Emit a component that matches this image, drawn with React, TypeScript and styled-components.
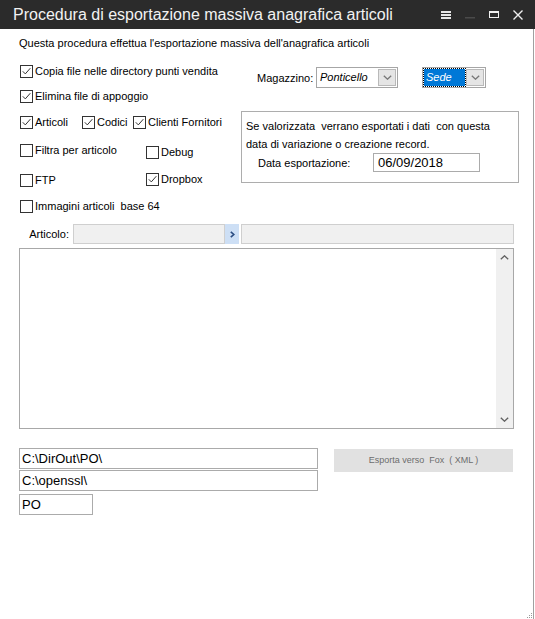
import React from "react";
import styled, { createGlobalStyle } from "styled-components";

const GlobalStyle = createGlobalStyle`
  html, body { margin: 0; padding: 0; background: #fff; }
  body {
    font-family: "Liberation Sans", Arial, sans-serif;
    font-size: 11px;
    color: #000;
  }
  * { box-sizing: border-box; }
`;

const Window = styled.div`
  width: 535px;
  height: 619px;
  display: flex;
  flex-direction: column;
  background: #fff;
  overflow: hidden;
`;

const TitleBar = styled.div`
  height: 29px;
  flex: none;
  background: #2b2b2b;
  display: flex;
  align-items: center;
  padding: 0 5px 0 13px;
`;

const Title = styled.div`
  flex: 1;
  color: #f2f2f2;
  font-size: 16px;
  line-height: 29px;
  white-space: nowrap;
`;

const Controls = styled.div`
  display: flex;
`;

const CtrlButton = styled.div`
  width: 24px;
  height: 29px;
  display: flex;
  align-items: center;
  justify-content: center;
`;

const Body = styled.div`
  position: relative;
  flex: 1;
  margin-right: 1px;
  border-right: 1px solid #a0a0a0;
  padding: 8px 0 0 19px;
  display: flex;
  flex-direction: column;
`;

const Intro = styled.div`
  line-height: 13px;
  height: 13px;
  white-space: nowrap;
`;

const TopSection = styled.div`
  display: grid;
  grid-template-columns: 222px 1fr;
  align-items: start;
`;

const LeftCol = styled.div`
  display: flex;
  flex-direction: column;
`;

const RightCol = styled.div`
  display: flex;
  flex-direction: column;
`;

const CheckRow = styled.div<{ $mt: number; $cols?: string }>`
  display: grid;
  grid-template-columns: ${(p) => p.$cols ?? "auto"};
  justify-content: start;
  margin-top: ${(p) => p.$mt}px;
  margin-left: 1px;
  height: 13px;
`;

const CheckLabel = styled.label<{ $dy?: number }>`
  display: flex;
  align-items: center;
  gap: 2px;
  height: 13px;
  line-height: 13px;
  white-space: pre;
  margin-top: ${(p) => p.$dy ?? 0}px;
`;

const Box = styled.span`
  width: 13px;
  height: 13px;
  flex: none;
  border: 1px solid #333;
  background: #fff;
  display: flex;
  align-items: center;
  justify-content: center;
`;

const MagRow = styled.div`
  display: flex;
  align-items: center;
  height: 21px;
  margin-top: 17px;
  padding-left: 16px;
`;

const MagLabel = styled.span`
  width: 59px;
  white-space: nowrap;
`;

const Combo = styled.div<{ $w: number; $ml?: number }>`
  width: ${(p) => p.$w}px;
  height: 21px;
  margin-left: ${(p) => p.$ml ?? 0}px;
  border: 1px solid #a6a6a6;
  background: #fff;
  padding: 1px;
  display: flex;
  gap: 1px;
`;

const ComboText = styled.div<{ $selected?: boolean }>`
  flex: 1;
  font-style: italic;
  line-height: 17px;
  padding-left: 2px;
  white-space: nowrap;
  overflow: hidden;
  color: ${(p) => (p.$selected ? "#fff" : "#000")};
  background: ${(p) => (p.$selected ? "#0078d7" : "transparent")};
  outline: ${(p) => (p.$selected ? "1px dotted #000" : "none")};
`;

const ComboButton = styled.div`
  width: 18px;
  height: 17px;
  flex: none;
  border: 1px solid #b9b9b9;
  background: #e5e5e5;
  display: flex;
  align-items: center;
  justify-content: center;
`;

const GroupBox = styled.div`
  width: 278px;
  height: 72px;
  margin-top: 23px;
  border: 1px solid #adadad;
  padding: 5px 4px 0 4px;
`;

const GroupLine = styled.div`
  line-height: 18px;
  height: 18px;
  white-space: pre;
`;

const DateRow = styled.div`
  display: flex;
  align-items: center;
  height: 19px;
  padding-left: 12px;
`;

const DateLabel = styled.span`
  width: 115px;
  white-space: nowrap;
`;

const TextField = styled.div<{ $w: number; $h?: number; $mt?: number }>`
  width: ${(p) => p.$w}px;
  height: ${(p) => p.$h ?? 21}px;
  margin-top: ${(p) => p.$mt ?? 0}px;
  border: 1px solid #ababab;
  background: #fff;
  font-size: 13px;
  line-height: ${(p) => (p.$h ?? 21) - 2}px;
  padding-left: 2px;
  white-space: nowrap;
`;

const DateField = styled(TextField)`
  padding-left: 4px;
`;

const ArticoloRow = styled.div`
  display: flex;
  height: 20px;
  margin-top: 11px;
`;

const ArtLabel = styled.span`
  width: 50px;
  margin-right: 4px;
  text-align: right;
  line-height: 20px;
`;

const GrayField = styled.div<{ $w: number; $ml?: number }>`
  width: ${(p) => p.$w}px;
  margin-left: ${(p) => p.$ml ?? 0}px;
  height: 20px;
  border: 1px solid #cfcfcf;
  background: #f0f0f0;
`;

const LookupButton = styled.div`
  width: 14px;
  height: 20px;
  background: #cddff5;
  display: flex;
  align-items: center;
  justify-content: center;
`;

const ListArea = styled.div`
  width: 495px;
  height: 181px;
  margin-top: 4px;
  border: 1px solid #a8a8a8;
  display: flex;
  justify-content: flex-end;
`;

const ScrollBar = styled.div`
  width: 17px;
  height: 100%;
  background: #f0f0f0;
  display: flex;
  flex-direction: column;
  justify-content: space-between;
`;

const ScrollArrow = styled.div`
  height: 17px;
  display: flex;
  align-items: center;
  justify-content: center;
`;

const BottomSection = styled.div`
  display: grid;
  grid-template-columns: 299px 179px;
  column-gap: 16px;
  align-items: start;
  margin-top: 19px;
`;

const PathCol = styled.div`
  display: flex;
  flex-direction: column;
`;

const ExportButton = styled.div`
  height: 23px;
  margin-top: 1px;
  background: #e1e1e1;
  color: #6d6d6d;
  font-size: 9px;
  line-height: 23px;
  text-align: center;
  white-space: pre;
`;

const Grip = styled.svg`
  position: absolute;
  right: 0;
  bottom: 0;
`;

const CheckMark = () => (
  <svg width="9" height="9" viewBox="0 0 9 9">
    <path d="M0.8 4.3 L3.3 6.9 L8.3 1.2" fill="none" stroke="#333" strokeWidth="1" />
  </svg>
);

const Check = ({ label, checked, dy }: { label: string; checked?: boolean; dy?: number }) => (
  <CheckLabel $dy={dy}>
    <Box>{checked && <CheckMark />}</Box>
    <span>{label}</span>
  </CheckLabel>
);

const Chevron = ({ up, color = "#555" }: { up?: boolean; color?: string }) => (
  <svg width="9" height="5" viewBox="0 0 9 5">
    <path
      d={up ? "M0.8 4.3 L4.5 0.8 L8.2 4.3" : "M0.8 0.7 L4.5 4.2 L8.2 0.7"}
      fill="none"
      stroke={color}
      strokeWidth="1.3"
    />
  </svg>
);

export default function App() {
  return (
    <>
      <GlobalStyle />
      <Window>
        <TitleBar>
          <Title>Procedura di esportazione massiva anagrafica articoli</Title>
          <Controls>
            <CtrlButton>
              <svg width="10" height="8" viewBox="0 0 10 8">
                <rect x="0" y="0" width="10" height="2" fill="#e6e6e6" />
                <rect x="0" y="3" width="10" height="2" fill="#e6e6e6" />
                <rect x="0" y="6" width="10" height="2" fill="#e6e6e6" />
              </svg>
            </CtrlButton>
            <CtrlButton>
              <svg width="10" height="10" viewBox="0 0 10 10">
                <rect x="0" y="7" width="10" height="1.5" fill="#4a4a4a" />
              </svg>
            </CtrlButton>
            <CtrlButton>
              <svg width="10" height="7" viewBox="0 0 10 7">
                <rect x="0.5" y="0.5" width="9" height="6" fill="none" stroke="#f0f0f0" strokeWidth="1" />
                <rect x="0" y="0" width="10" height="2" fill="#f0f0f0" />
              </svg>
            </CtrlButton>
            <CtrlButton>
              <svg width="10" height="10" viewBox="0 0 10 10">
                <path d="M0.5 0.5 L9.5 9.5 M9.5 0.5 L0.5 9.5" stroke="#f0f0f0" strokeWidth="1.4" />
              </svg>
            </CtrlButton>
          </Controls>
        </TitleBar>
        <Body>
          <Intro>Questa procedura effettua l'esportazione massiva dell'anagrafica articoli</Intro>
          <TopSection>
            <LeftCol>
              <CheckRow $mt={15}>
                <Check checked label="Copia file nelle directory punti vendita" />
              </CheckRow>
              <CheckRow $mt={12}>
                <Check checked label="Elimina file di appoggio" />
              </CheckRow>
              <CheckRow $mt={13} $cols="62px 51px auto">
                <Check checked label="Articoli" />
                <Check checked label="Codici" />
                <Check checked label="Clienti Fornitori" />
              </CheckRow>
              <CheckRow $mt={15} $cols="126px auto">
                <Check label="Filtra per articolo" />
                <Check label="Debug" dy={2} />
              </CheckRow>
              <CheckRow $mt={17} $cols="126px auto">
                <Check label="FTP" />
                <Check checked label="Dropbox" dy={-1} />
              </CheckRow>
              <CheckRow $mt={13}>
                <Check label="Immagini articoli  base 64" />
              </CheckRow>
            </LeftCol>
            <RightCol>
              <MagRow>
                <MagLabel>Magazzino:</MagLabel>
                <Combo $w={82}>
                  <ComboText>Ponticello</ComboText>
                  <ComboButton>
                    <Chevron color="#777" />
                  </ComboButton>
                </Combo>
                <Combo $w={64} $ml={24}>
                  <ComboText $selected>Sede</ComboText>
                  <ComboButton>
                    <Chevron color="#777" />
                  </ComboButton>
                </Combo>
              </MagRow>
              <GroupBox>
                <GroupLine>{"Se valorizzata  verrano esportati i dati  con questa"}</GroupLine>
                <GroupLine>data di variazione o creazione record.</GroupLine>
                <DateRow>
                  <DateLabel>Data esportazione:</DateLabel>
                  <DateField $w={107} $h={19}>06/09/2018</DateField>
                </DateRow>
              </GroupBox>
            </RightCol>
          </TopSection>
          <ArticoloRow>
            <ArtLabel>Articolo:</ArtLabel>
            <GrayField $w={152} />
            <LookupButton>
              <svg width="5" height="7" viewBox="0 0 5 7">
                <path d="M0.8 0.8 L3.8 3.5 L0.8 6.2" fill="none" stroke="#2a4c82" strokeWidth="1.6" />
              </svg>
            </LookupButton>
            <GrayField $w={273} $ml={2} />
          </ArticoloRow>
          <ListArea>
            <ScrollBar>
              <ScrollArrow>
                <Chevron up color="#606060" />
              </ScrollArrow>
              <ScrollArrow>
                <Chevron color="#606060" />
              </ScrollArrow>
            </ScrollBar>
          </ListArea>
          <BottomSection>
            <PathCol>
              <TextField $w={299}>C:\DirOut\PO\</TextField>
              <TextField $w={299} $mt={1}>C:\openssl\</TextField>
              <TextField $w={74} $mt={3}>PO</TextField>
            </PathCol>
            <ExportButton>{"Esporta verso  Fox  ( XML )"}</ExportButton>
          </BottomSection>
          <Grip width="7" height="7" viewBox="0 0 7 7">
            <rect x="5" y="1" width="1" height="1" fill="#9a9a9a" />
            <rect x="3" y="3" width="1" height="1" fill="#9a9a9a" />
            <rect x="5" y="3" width="1" height="1" fill="#9a9a9a" />
            <rect x="1" y="5" width="1" height="1" fill="#9a9a9a" />
            <rect x="3" y="5" width="1" height="1" fill="#9a9a9a" />
            <rect x="5" y="5" width="1" height="1" fill="#9a9a9a" />
          </Grip>
        </Body>
      </Window>
    </>
  );
}
